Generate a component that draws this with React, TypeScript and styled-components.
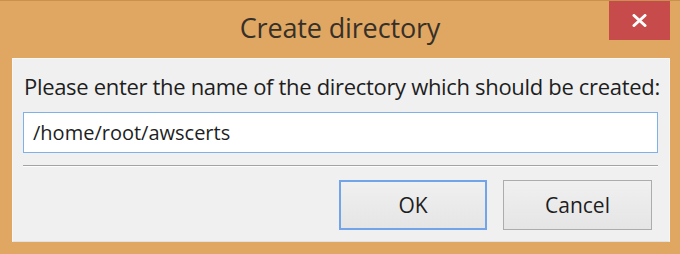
import React from 'react'
import styled, { createGlobalStyle } from 'styled-components'

const GlobalStyle = createGlobalStyle`
  html, body {
    margin: 0;
    padding: 0;
    background: #e0a762;
  }
  * { box-sizing: border-box; }
`

const Window = styled.div`
  width: 680px;
  height: 254px;
  background: #e0a762;
  border-top: 1px solid #c9914f;
  display: flex;
  flex-direction: column;
  font-family: "Open Sans", "Noto Sans", sans-serif;
  overflow: hidden;
`

const TitleBar = styled.div`
  height: 57px;
  display: grid;
  grid-template-columns: 1fr auto 1fr;
`

const Title = styled.div`
  grid-column: 2;
  align-self: center;
  margin-top: -4px;
  font-size: 27px;
  color: #363029;
  letter-spacing: -0.15px;
`

const CloseButton = styled.button`
  grid-column: 3;
  justify-self: end;
  align-self: start;
  width: 61px;
  height: 40px;
  margin: -1px 10px 0 0;
  border: none;
  padding: 0;
  background: #c84b4b;
  display: flex;
  align-items: center;
  justify-content: center;
`

const Panel = styled.div`
  flex: 1;
  margin: 0 10px 12px 12px;
  background: #f0f0f0;
  border: 1px solid #f7f7f7;
  border-bottom-color: #e2e2e2;
  padding: 12px 11px 0 10px;
  display: flex;
  flex-direction: column;
`

const Prompt = styled.label`
  font-size: 22px;
  color: #1e1e1e;
  line-height: 30px;
  padding-left: 1px;
  white-space: nowrap;
  letter-spacing: -0.32px;
`

const PathInput = styled.input`
  margin-top: 11px;
  height: 41px;
  border: 1px solid #7eb1e8;
  background: #fff;
  padding: 0 9px;
  font-family: inherit;
  font-size: 20px;
  color: #1e1e1e;
  outline: none;
`

const Separator = styled.div`
  margin-top: 12px;
  height: 2px;
  border-top: 1px solid #a3a3a3;
  border-bottom: 1px solid #fdfdfd;
`

const ButtonRow = styled.div`
  margin-top: 13px;
  display: flex;
  justify-content: flex-end;
  gap: 16px;
  padding-right: 6px;
`

const DialogButton = styled.button<{ $default?: boolean }>`
  width: ${p => (p.$default ? 148 : 149)}px;
  height: 50px;
  font-family: inherit;
  font-size: 21px;
  color: #1e1e1e;
  background: linear-gradient(#f0f0f0, #e5e5e5);
  border: ${p => (p.$default ? '2px solid #72a4ea' : '1px solid #acacac')};
  padding: 0;
`

export default function App() {
  return (
    <>
      <GlobalStyle />
      <Window>
        <TitleBar>
          <Title>Create directory</Title>
          <CloseButton aria-label="Close">
            <svg width="15" height="13" viewBox="0 0 15 13">
              <path d="M2 1.5 L13 11.5 M13 1.5 L2 11.5" stroke="#fff" strokeWidth="3" strokeLinecap="round" />
            </svg>
          </CloseButton>
        </TitleBar>
        <Panel>
          <Prompt>Please enter the name of the directory which should be created:</Prompt>
          <PathInput defaultValue="/home/root/awscerts" />
          <Separator />
          <ButtonRow>
            <DialogButton $default>OK</DialogButton>
            <DialogButton>Cancel</DialogButton>
          </ButtonRow>
        </Panel>
      </Window>
    </>
  )
}
